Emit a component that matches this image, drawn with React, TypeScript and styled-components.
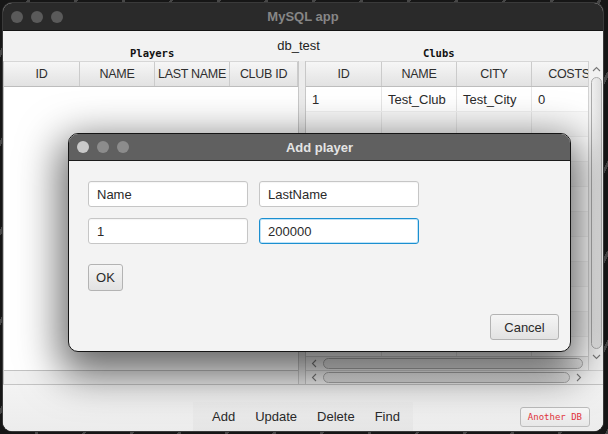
import React from "react";
import styled, { createGlobalStyle } from "styled-components";

const SANS = `"Liberation Sans", Arial, Helvetica, sans-serif`;
const MONO = `"DejaVu Sans Mono", "Liberation Mono", monospace`;

const GlobalStyle = createGlobalStyle`
  html, body { margin: 0; padding: 0; width: 608px; height: 434px; overflow: hidden; background: #171717; }
  * { box-sizing: border-box; }
`;

const Desktop = styled.div`
  position: relative;
  width: 608px;
  height: 434px;
  padding: 3px 5px 3px 3px;
  background: repeating-linear-gradient(118deg, #161616 0 24px, #474747 24px 27px, #161616 27px 42px);
  font-family: ${SANS};
`;

const Window = styled.div`
  width: 600px;
  height: 428px;
  border-radius: 9px;
  overflow: hidden;
  display: flex;
  flex-direction: column;
  background: #f2f2f2;
  box-shadow: 0 0 0 1px #3a3a3a;
`;

const TitleBar = styled.div<{ $bg: string; $h: number; $line: string }>`
  flex: none;
  height: ${(p) => p.$h}px;
  background: ${(p) => p.$bg};
  border-bottom: 1px solid ${(p) => p.$line};
  display: grid;
  grid-template-columns: 1fr auto 1fr;
  align-items: center;
  padding: 0 8px;
`;

const Lights = styled.div`
  display: flex;
  gap: 8px;
`;

const Light = styled.span<{ $c: string }>`
  width: 12px;
  height: 12px;
  border-radius: 50%;
  background: ${(p) => p.$c};
`;

const TitleText = styled.div<{ $c: string }>`
  font: bold 13px ${SANS};
  color: ${(p) => p.$c};
  justify-self: center;
`;

const Content = styled.div`
  flex: 1;
  display: flex;
  flex-direction: column;
  background: #f2f2f2;
`;

const LabelRow = styled.div`
  height: 30px;
  flex: none;
  display: flex;
  align-items: flex-start;
`;

const SectionTitle = styled.div<{ $ml: number }>`
  margin: 16px 0 0 ${(p) => p.$ml}px;
  font: bold 10.5px/12px ${MONO};
  color: #111;
`;

const DbName = styled.div`
  margin: 7px 0 0 103px;
  font: 13px/15px ${SANS};
  color: #222;
`;

const Split = styled.div`
  height: 324px;
  flex: none;
  display: flex;
  border-bottom: 1px solid #c4c4c4;
`;

const LeftPane = styled.div`
  width: 295px;
  display: flex;
  flex-direction: column;
  border-left: 1px solid #c0c0c0;
`;

const HeaderRow = styled.div<{ $cols: string }>`
  flex: none;
  height: 26px;
  display: grid;
  grid-template-columns: ${(p) => p.$cols};
  background: linear-gradient(#f6f6f6, #e2e2e2);
  border-top: 1px solid #d6d6d6;
  border-bottom: 1px solid #bdbdbd;
`;

const HeaderCell = styled.div`
  display: flex;
  align-items: center;
  justify-content: center;
  border-right: 1px solid #cbcbcb;
  font: 12.5px ${SANS};
  letter-spacing: -0.3px;
  color: #2e2e2e;
  white-space: nowrap;
  overflow: hidden;
`;

const EmptyBody = styled.div`
  flex: 1;
  background: #ffffff;
`;

const ScrollGap = styled.div`
  flex: none;
  height: 14px;
  border-top: 1px solid #c2c2c2;
  background: #f0f0f0;
`;

const Divider = styled.div`
  width: 8px;
  background: #ececec;
  border-left: 1px solid #c8c8c8;
  border-right: 1px solid #c8c8c8;
`;

const RightPane = styled.div`
  flex: 1;
  display: flex;
  flex-direction: column;
`;

const RightTop = styled.div`
  flex: 1;
  display: flex;
  min-height: 0;
`;

const TableArea = styled.div`
  width: 282px;
  display: flex;
  flex-direction: column;
`;

const TableClip = styled.div`
  flex: 1;
  overflow: hidden;
  display: flex;
  flex-direction: column;
`;

const Rows = styled.div`
  flex: 1;
  overflow: hidden;
  background: #ffffff;
`;

const Row = styled.div<{ $alt: boolean }>`
  height: 25px;
  display: grid;
  grid-template-columns: 76px 75px 75px 75px;
  background: ${(p) => (p.$alt ? "#f9f9f9" : "#ffffff")};
  border-bottom: 1px solid #f0f0f0;
`;

const Cell = styled.div`
  display: flex;
  align-items: center;
  padding-left: 6px;
  border-right: 1px solid #e6e6e6;
  font: 13px ${SANS};
  color: #2a2a2a;
  white-space: nowrap;
`;

const HScroll = styled.div<{ $short?: boolean }>`
  flex: none;
  height: 14px;
  display: flex;
  align-items: center;
  gap: 4px;
  padding: 0 ${(p) => (p.$short ? "20px" : "5px")} 0 4px;
  background: #f1f1f1;
  border-top: 1px solid #d2d2d2;
`;

const HThumb = styled.div`
  flex: 1;
  height: 11px;
  border-radius: 6px;
  border: 1px solid #aaaaaa;
  background: linear-gradient(#efefef, #dedede);
`;

const VScroll = styled.div`
  flex: 1;
  display: flex;
  flex-direction: column;
  align-items: center;
  padding: 4px 0 2px;
  gap: 3px;
  background: #f1f1f1;
  border-left: 1px solid #d2d2d2;
`;

const VThumb = styled.div`
  width: 11px;
  height: 272px;
  border-radius: 6px;
  border: 1px solid #aaaaaa;
  background: linear-gradient(90deg, #efefef, #dedede);
`;

const BottomBar = styled.div`
  flex: 1;
  display: flex;
  align-items: flex-end;
  background: linear-gradient(#f3f3f3, #ececec);
`;

const Toolbar = styled.div`
  margin-left: 190px;
  height: 29px;
  display: flex;
  align-items: center;
  padding: 0 3px 0 9px;
  background: linear-gradient(#ededed, #e5e5e5);
`;

const ToolButton = styled.div`
  padding: 0 10px;
  font: 13px ${SANS};
  color: #2a2a2a;
`;

const DbButton = styled.div`
  margin: 0 13px 4px auto;
  height: 20px;
  padding: 0 7px;
  display: flex;
  align-items: center;
  border: 1px solid #bcbcbc;
  border-radius: 3px;
  background: linear-gradient(#f8f8f8, #e7e7e7);
  font: 9px ${MONO};
  color: #e2343c;
`;

const Dialog = styled.div`
  position: absolute;
  left: 68px;
  top: 133px;
  width: 503px;
  height: 219px;
  display: flex;
  flex-direction: column;
  border: 1px solid #151515;
  border-radius: 10px;
  overflow: hidden;
  background: #f3f3f3;
  box-shadow: 0 14px 42px 8px rgba(0, 0, 0, 0.6);
`;

const DialogBody = styled.div`
  flex: 1;
  display: flex;
  flex-direction: column;
  align-items: flex-start;
  padding: 20px 11px 11px 19px;
`;

const FieldGrid = styled.div`
  display: grid;
  grid-template-columns: 160px 160px;
  grid-auto-rows: 26px;
  gap: 11px;
`;

const Field = styled.div<{ $focus?: boolean }>`
  display: flex;
  align-items: center;
  padding: 0 8px;
  background: #ffffff;
  border: 1px solid ${(p) => (p.$focus ? "#1b8fd0" : "#c6c6c6")};
  border-radius: 3px;
  box-shadow: ${(p) => (p.$focus ? "inset 0 0 0 1px #bfe3f7" : "inset 0 1px 1px rgba(0,0,0,0.04)")};
  font: 13px ${SANS};
  color: #2a2a2a;
`;

const PushButton = styled.div<{ $w: number; $h: number }>`
  width: ${(p) => p.$w}px;
  height: ${(p) => p.$h}px;
  display: flex;
  align-items: center;
  justify-content: center;
  border: 1px solid #b3b3b3;
  border-radius: 3px;
  background: linear-gradient(#f5f5f5, #e2e2e2);
  font: 13px ${SANS};
  color: #2a2a2a;
`;

const OkWrap = styled.div`
  margin-top: 20px;
`;

const CancelWrap = styled.div`
  margin-top: auto;
  align-self: flex-end;
`;

const Chevron = ({ dir }: { dir: "up" | "down" | "left" | "right" }) => {
  const pts = {
    up: "1,6 4.5,2.5 8,6",
    down: "1,3 4.5,6.5 8,3",
    left: "6,1 2.5,4.5 6,8",
    right: "3,1 6.5,4.5 3,8",
  }[dir];
  return (
    <svg width="9" height="9" viewBox="0 0 9 9" style={{ flex: "none" }}>
      <polyline points={pts} fill="none" stroke="#7a7a7a" strokeWidth="1.1" />
    </svg>
  );
};

const playerCols = ["ID", "NAME", "LAST NAME", "CLUB ID"];
const clubCols = ["ID", "NAME", "CITY", "COSTS"];
const clubRows: string[][] = [["1", "Test_Club", "Test_City", "0"]];

export default function App() {
  const rows = Array.from({ length: 11 }, (_, i) => clubRows[i] ?? ["", "", "", ""]);
  return (
    <>
      <GlobalStyle />
      <Desktop>
        <Window>
          <TitleBar $bg="#2a2a2a" $h={28} $line="#141414">
            <Lights>
              {[0, 1, 2].map((i) => (
                <Light key={i} $c="#5a5a5a" />
              ))}
            </Lights>
            <TitleText $c="#868686">MySQL app</TitleText>
          </TitleBar>
          <Content>
            <LabelRow>
              <SectionTitle $ml={127}>Players</SectionTitle>
              <DbName>db_test</DbName>
              <SectionTitle $ml={103}>Clubs</SectionTitle>
            </LabelRow>
            <Split>
              <LeftPane>
                <HeaderRow $cols="76px 75px 75px 68px">
                  {playerCols.map((c) => (
                    <HeaderCell key={c}>{c}</HeaderCell>
                  ))}
                </HeaderRow>
                <EmptyBody />
                <ScrollGap />
              </LeftPane>
              <Divider />
              <RightPane>
                <RightTop>
                  <TableArea>
                    <TableClip>
                      <HeaderRow $cols="76px 75px 75px 75px">
                        {clubCols.map((c) => (
                          <HeaderCell key={c}>{c}</HeaderCell>
                        ))}
                      </HeaderRow>
                      <Rows>
                        {rows.map((r, i) => (
                          <Row key={i} $alt={i % 2 === 1}>
                            {r.map((v, j) => (
                              <Cell key={j}>{v}</Cell>
                            ))}
                          </Row>
                        ))}
                      </Rows>
                    </TableClip>
                    <HScroll>
                      <Chevron dir="left" />
                      <HThumb />
                    </HScroll>
                  </TableArea>
                  <VScroll>
                    <Chevron dir="up" />
                    <VThumb />
                    <Chevron dir="down" />
                  </VScroll>
                </RightTop>
                <HScroll $short>
                  <Chevron dir="left" />
                  <HThumb />
                  <Chevron dir="right" />
                </HScroll>
              </RightPane>
            </Split>
            <BottomBar>
              <Toolbar>
                <ToolButton>Add</ToolButton>
                <ToolButton>Update</ToolButton>
                <ToolButton>Delete</ToolButton>
                <ToolButton>Find</ToolButton>
              </Toolbar>
              <DbButton>Another DB</DbButton>
            </BottomBar>
          </Content>
        </Window>
        <Dialog>
          <TitleBar $bg="#606060" $h={27} $line="#1c1c1c">
            <Lights>
              <Light $c="#c9c9c9" />
              <Light $c="#8c8c8c" />
              <Light $c="#8c8c8c" />
            </Lights>
            <TitleText $c="#e4e4e4">Add player</TitleText>
          </TitleBar>
          <DialogBody>
            <FieldGrid>
              <Field>Name</Field>
              <Field>LastName</Field>
              <Field>1</Field>
              <Field $focus>200000</Field>
            </FieldGrid>
            <OkWrap>
              <PushButton $w={35} $h={27}>OK</PushButton>
            </OkWrap>
            <CancelWrap>
              <PushButton $w={69} $h={26}>Cancel</PushButton>
            </CancelWrap>
          </DialogBody>
        </Dialog>
      </Desktop>
    </>
  );
}
